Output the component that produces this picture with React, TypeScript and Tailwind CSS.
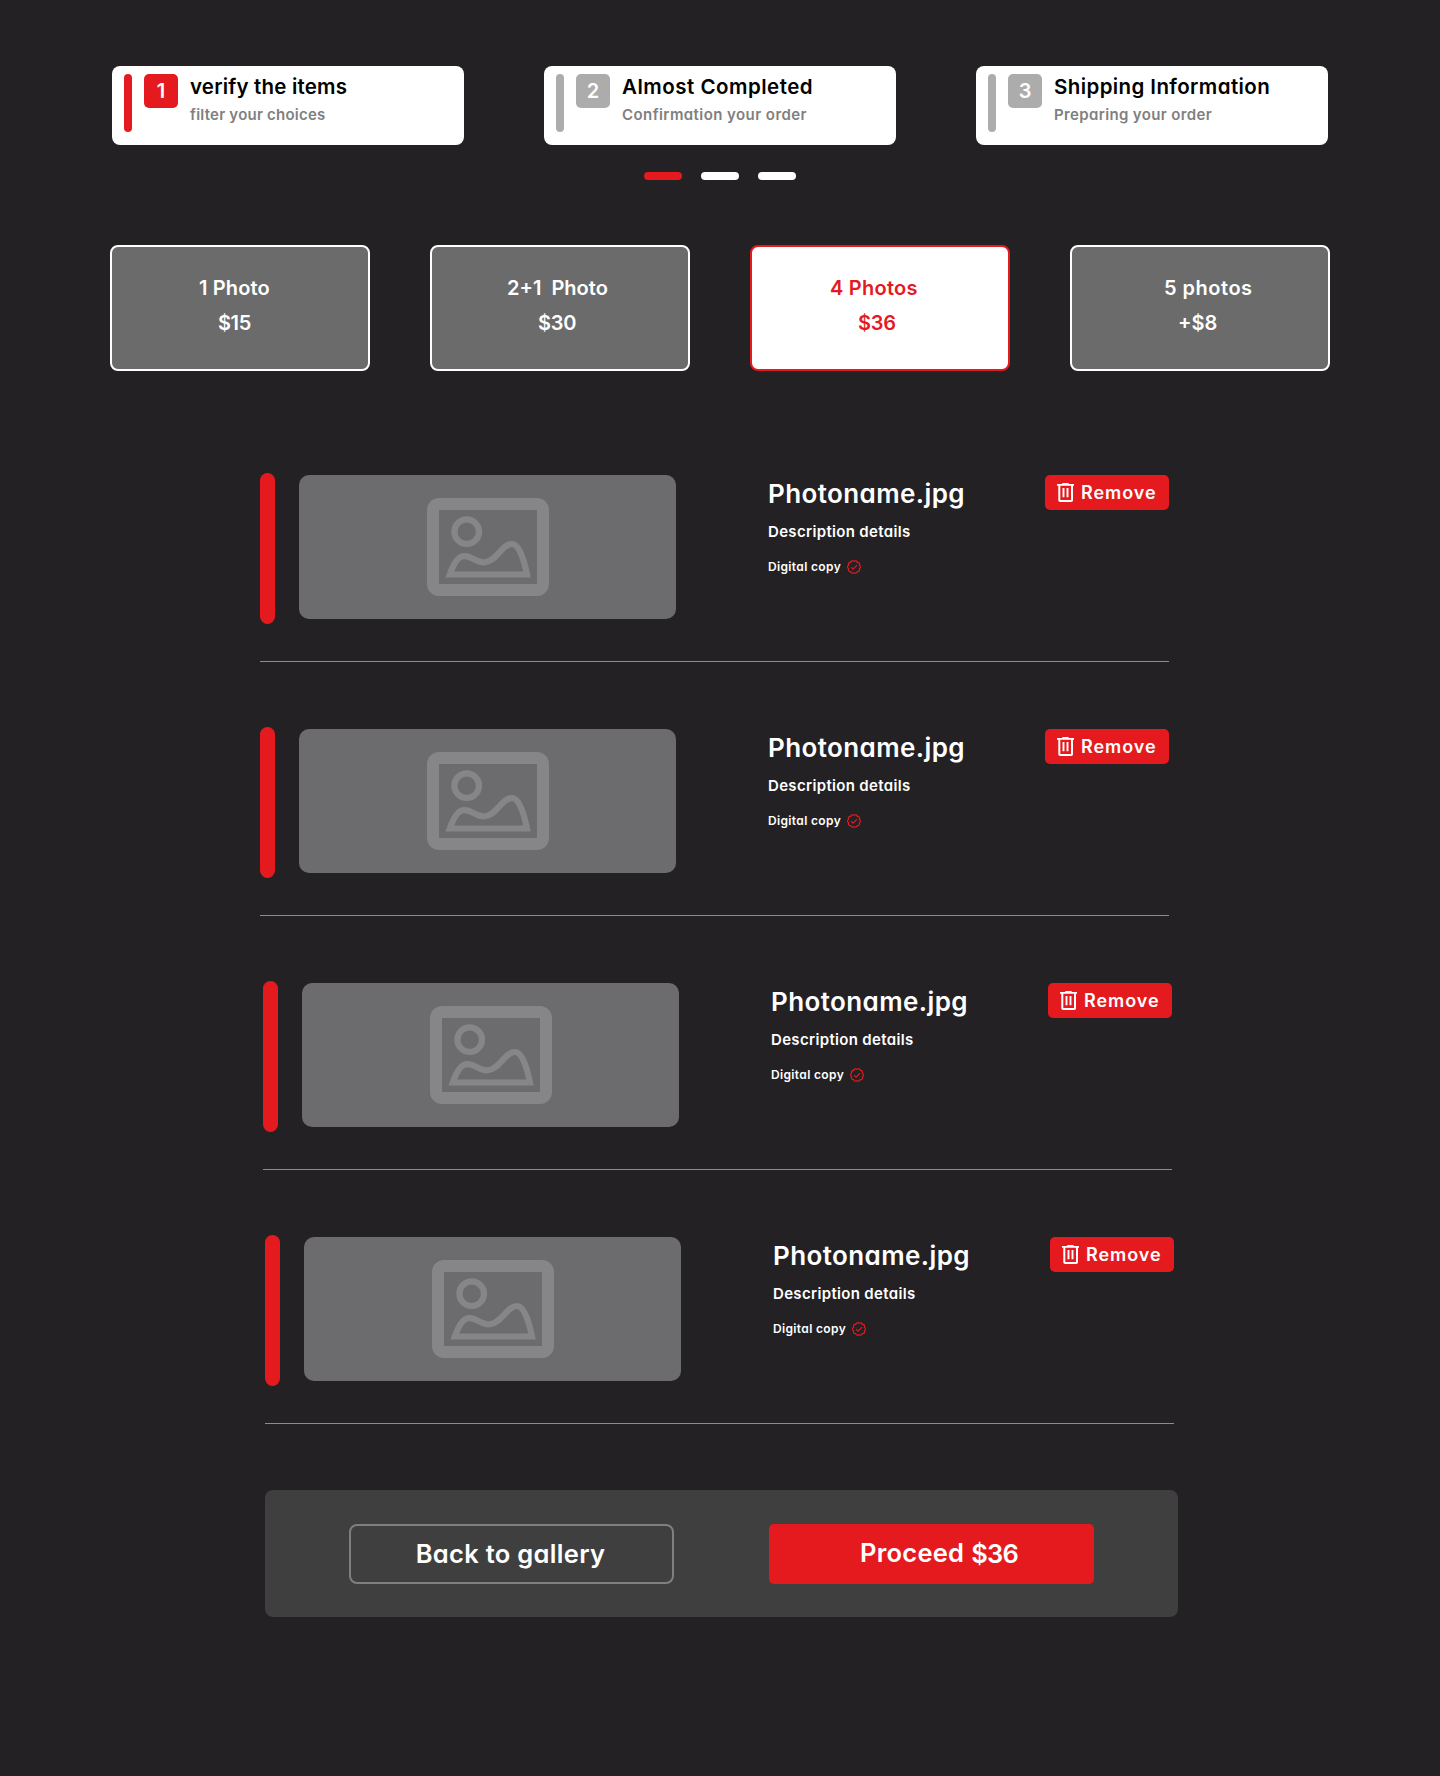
const steps = [
  { n: 1, title: "verify the items", sub: "filter your choices", active: true, titleCls: "tracking-[0.2px]", subCls: "tracking-[0.23px]" },
  { n: 2, title: "Almost Completed", sub: "Confirmation your order", active: false, titleCls: "tracking-[0.5px]", subCls: "tracking-[0.43px]" },
  { n: 3, title: "Shipping Information", sub: "Preparing your order", active: false, titleCls: "tracking-[0.4px]", subCls: "tracking-[0.36px]" },
];

const plans = [
  { title: "1 Photo", price: "$15", selected: false, titleCls: "pl-[87px] tracking-[0.15px]", priceCls: "pl-[106px] tracking-[-0.4px]" },
  { title: "2+1  Photo", price: "$30", selected: false, titleCls: "pl-[75px] tracking-[0px]", priceCls: "pl-[106px] tracking-[-0.2px]" },
  { title: "4 Photos", price: "$36", selected: true, titleCls: "pl-[78px] tracking-[0.25px]", priceCls: "pl-[106px] tracking-[-0.2px]" },
  { title: "5 photos", price: "+$8", selected: false, titleCls: "pl-[92px] tracking-[0.5px]", priceCls: "pl-[106px] tracking-[0px]" },
];

const photos = [
  { id: 1, offset: "ml-[260px]" },
  { id: 2, offset: "ml-[260px]" },
  { id: 3, offset: "ml-[263px]" },
  { id: 4, offset: "ml-[265px]" },
];

const LOBES = 10;
const sealPath =
  Array.from({ length: LOBES }, (_, i) => {
    const a = ((i * 360) / LOBES - 90) * (Math.PI / 180);
    const x = (7 + 5.6 * Math.cos(a)).toFixed(2);
    const y = (7 + 5.6 * Math.sin(a)).toFixed(2);
    return i === 0 ? `M${x} ${y}` : `A1.9 1.9 0 0 1 ${x} ${y}`;
  }).join("") + "A1.9 1.9 0 0 1 7 1.4Z";

function SealCheck() {
  return (
    <svg className="size-3.5" viewBox="0 0 14 14" fill="none" stroke="#e51a1f" strokeWidth="1.15">
      <path d={sealPath} />
      <path d="M4 7.2 6.1 9.2 10 5.1" />
    </svg>
  );
}

function TrashIcon() {
  return (
    <svg className="h-[19px] w-[17px]" viewBox="0 0 17 19" fill="none">
      <path d="M5.3 0h6.3v1H17v1.8H0V1h5.3z" fill="#fff" />
      <path d="M2.3 2v15.2a.8.8 0 0 0 .8.8h11.1a.8.8 0 0 0 .8-.8V2" stroke="#fff" strokeWidth="2" />
      <path d="M6.5 5v9.3M10.5 5v9.3" stroke="#fff" strokeWidth="1.9" />
    </svg>
  );
}

function PictureIcon() {
  return (
    <svg className="h-[98px] w-[122px]" viewBox="0 0 122 98" fill="none" stroke="#868688">
      <rect x="6" y="6" width="110" height="86" rx="6" strokeWidth="12" />
      <circle cx="39.7" cy="33.7" r="12.3" strokeWidth="6.2" />
      <path
        d="M22.8 76.5C26.5 66 31 58.2 37.2 58.2C45 58.2 49 64.4 57.3 64.4C68.5 64.4 75 46 85 46C92.5 46 97.5 64 100 76.5Z"
        strokeWidth="6.2"
        strokeMiterlimit="6"
      />
    </svg>
  );
}

function StepCard({ step }: { step: (typeof steps)[number] }) {
  const tone = step.active ? "bg-[#e51a1f]" : "bg-[#acacac]";
  return (
    <div className="flex h-[79px] w-[352px] rounded-lg bg-white pl-3">
      <div className={`mt-2 h-[58px] w-2 rounded-full ${tone}`} />
      <div className={`mt-2 ml-3 flex size-[34px] items-center justify-center rounded-[5px] text-xl text-white ${tone}`}>
        {step.n}
      </div>
      <div className="ml-3 pt-[7px]">
        <h3 className={`text-[20.5px] leading-7 text-black ${step.titleCls}`}>{step.title}</h3>
        <p className={`mt-1 text-[15px] leading-5 text-[#808080] ${step.subCls}`}>{step.sub}</p>
      </div>
    </div>
  );
}

function PhotoRow({ offset }: { offset: string }) {
  return (
    <section className={`flex h-[189px] w-[909px] items-start border-b border-[#8c8c8d] ${offset}`}>
      <div className="h-[151px] w-[15px] rounded-full bg-[#e51a1f]" />
      <div className="mt-0.5 ml-6 flex h-36 w-[377px] items-center justify-center rounded-[10px] bg-[#6c6c6e]">
        <PictureIcon />
      </div>
      <div className="ml-[92px] flex-1 pt-[3px] text-white">
        <h2 className="text-[26px] leading-9 tracking-[0.4px]">Photoname.jpg</h2>
        <p className="mt-2.5 text-[15px] leading-5 tracking-[0.33px]">Description details</p>
        <div className="mt-[17px] flex h-4 items-center gap-1.5">
          <span className="text-xs leading-4 tracking-[0.35px]">Digital copy</span>
          <SealCheck />
        </div>
      </div>
      <button className="mt-0.5 flex h-[35px] w-[124px] items-center rounded-[5px] bg-[#e51a1f] pl-3 text-white">
        <TrashIcon />
        <span className="ml-[7px] text-lg leading-6 tracking-[0.95px]">Remove</span>
      </button>
    </section>
  );
}

export default function App() {
  return (
    <main className="min-h-[1776px] w-[1440px] bg-[#232124] pt-[66px] font-['Inter',sans-serif] font-[580] [font-feature-settings:'cv11']">
      <div className="flex justify-center gap-20">
        {steps.map((s) => (
          <StepCard key={s.n} step={s} />
        ))}
      </div>

      <div className="mt-[27px] flex justify-center gap-[19px]">
        <span className="h-2 w-[38px] rounded-full bg-[#e51a1f]" />
        <span className="h-2 w-[38px] rounded-full bg-white" />
        <span className="h-2 w-[38px] rounded-full bg-white" />
      </div>

      <div className="mt-[65px] flex justify-center gap-[60px]">
        {plans.map((p) => (
          <div
            key={p.title}
            className={`h-[126px] w-[260px] rounded-lg border-2 pt-[26px] text-xl leading-[30px] whitespace-pre ${
              p.selected ? "border-[#e51a1f] bg-white text-[#e51a1f]" : "border-white bg-[#6b6b6b] text-white"
            }`}
          >
            <p className={p.titleCls}>{p.title}</p>
            <p className={`mt-[5px] ${p.priceCls}`}>{p.price}</p>
          </div>
        ))}
      </div>

      <div className="mt-[102px] flex flex-col gap-[65px]">
        {photos.map((p) => (
          <PhotoRow key={p.id} offset={p.offset} />
        ))}
      </div>

      <footer className="mt-[66px] ml-[265px] flex h-[127px] w-[913px] gap-[95px] rounded-lg bg-[#3f3f3f] pt-[34px] pl-[84px] text-[25.5px] text-white">
        <button className="flex h-[60px] w-[325px] items-center justify-center rounded-lg border-2 border-[#7f7f7f] pr-0.5 tracking-[0.3px]">
          Back to gallery
        </button>
        <button className="flex h-[60px] w-[325px] items-center rounded-[5px] bg-[#e51a1f] pl-[91px]">
          <span className="pb-0.5 tracking-[0.25px]">Proceed</span>
          <span className="ml-[7px] pt-px tracking-[-0.8px]">$36</span>
        </button>
      </footer>
    </main>
  );
}
